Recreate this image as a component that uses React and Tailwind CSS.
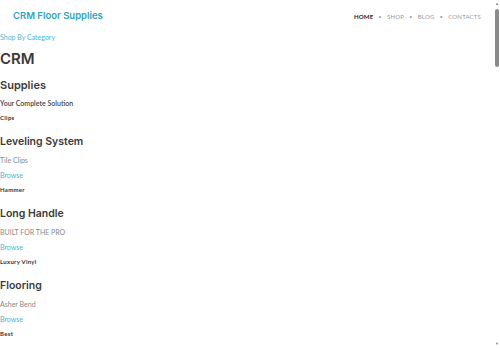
import React from "react";

const sections = [
  { title: "Leveling System", sub: "Tile Clips", next: "Hammer" },
  { title: "Long Handle", sub: "BUILT FOR THE PRO", next: "Luxury Vinyl" },
  { title: "Flooring", sub: "Asher Bend", next: "Best" },
];

// thin overlay scrollbar like the one in the browser chrome
function ScrollBar() {
  return (
    <div className="fixed top-0 right-0 h-full w-[6px] flex flex-col items-center justify-between py-[2px]">
      <span className="text-[4px] leading-[4px] text-[#888]">▲</span>
      <div className="flex-1 w-full pt-[3px]">
        <div className="h-[58px] w-[4px] ml-auto mr-[1px] rounded-full bg-[#8a8a8a]"></div>
      </div>
      <span className="text-[4px] leading-[4px] text-[#888]">▼</span>
    </div>
  );
}

export default function App() {
  return (
    <div className="bg-white min-h-[1960px] font-[Lato,'Open_Sans',sans-serif]">
      <ScrollBar />
      <header className="flex items-center justify-between h-[33px] pl-[13px] pr-[19px]">
        <span className="text-[9.5px] font-semibold text-[#2ea3c1] font-[Inter,'Open_Sans',sans-serif]">
          CRM Floor Supplies
        </span>
        <nav className="flex items-center gap-[5px] text-[6px] text-[#999] uppercase tracking-[0.2px]">
          <span className="text-[#222] font-bold">Home</span>
          <span className="text-[#aaa]">•</span>
          <span>Shop</span>
          <span className="text-[#aaa]">•</span>
          <span>Blog</span>
          <span className="text-[#aaa]">•</span>
          <span>Contacts</span>
        </nav>
      </header>

      <main className="flex flex-col">
        <a className="text-[7px] text-[#48b5d0] leading-[9px]">Shop By Category</a>
        <h1 className="text-[15px] font-semibold text-[#3a3a3a] leading-[22px] mt-[6px] font-[Inter,'Open_Sans',sans-serif]">
          CRM
        </h1>
        <h2 className="text-[11px] font-semibold text-[#3a3a3a] leading-[16px] mt-[7px] font-[Inter,'Open_Sans',sans-serif]">
          Supplies
        </h2>
        <p className="text-[7px] font-semibold text-[#444] leading-[9px] mt-[6px]">
          Your Complete Solution
        </p>
        <h6 className="text-[6px] font-bold text-[#333] leading-[8px] mt-[6px] tracking-[0.3px]">
          Clips
        </h6>

        {sections.map((s) => (
          <section key={s.title} className="flex flex-col mt-[12px]">
            <h3 className="text-[10.5px] font-semibold text-[#3a3a3a] leading-[16px] font-[Inter,'Open_Sans',sans-serif]">
              {s.title}
            </h3>
            <p className="text-[7px] text-[#888] leading-[9px] mt-[6px]">{s.sub}</p>
            <a className="text-[7px] text-[#48b5d0] leading-[9px] mt-[6px]">Browse</a>
            <h6 className="text-[6px] font-bold text-[#333] leading-[8px] mt-[6px] tracking-[0.3px]">
              {s.next}
            </h6>
          </section>
        ))}
      </main>
    </div>
  );
}
